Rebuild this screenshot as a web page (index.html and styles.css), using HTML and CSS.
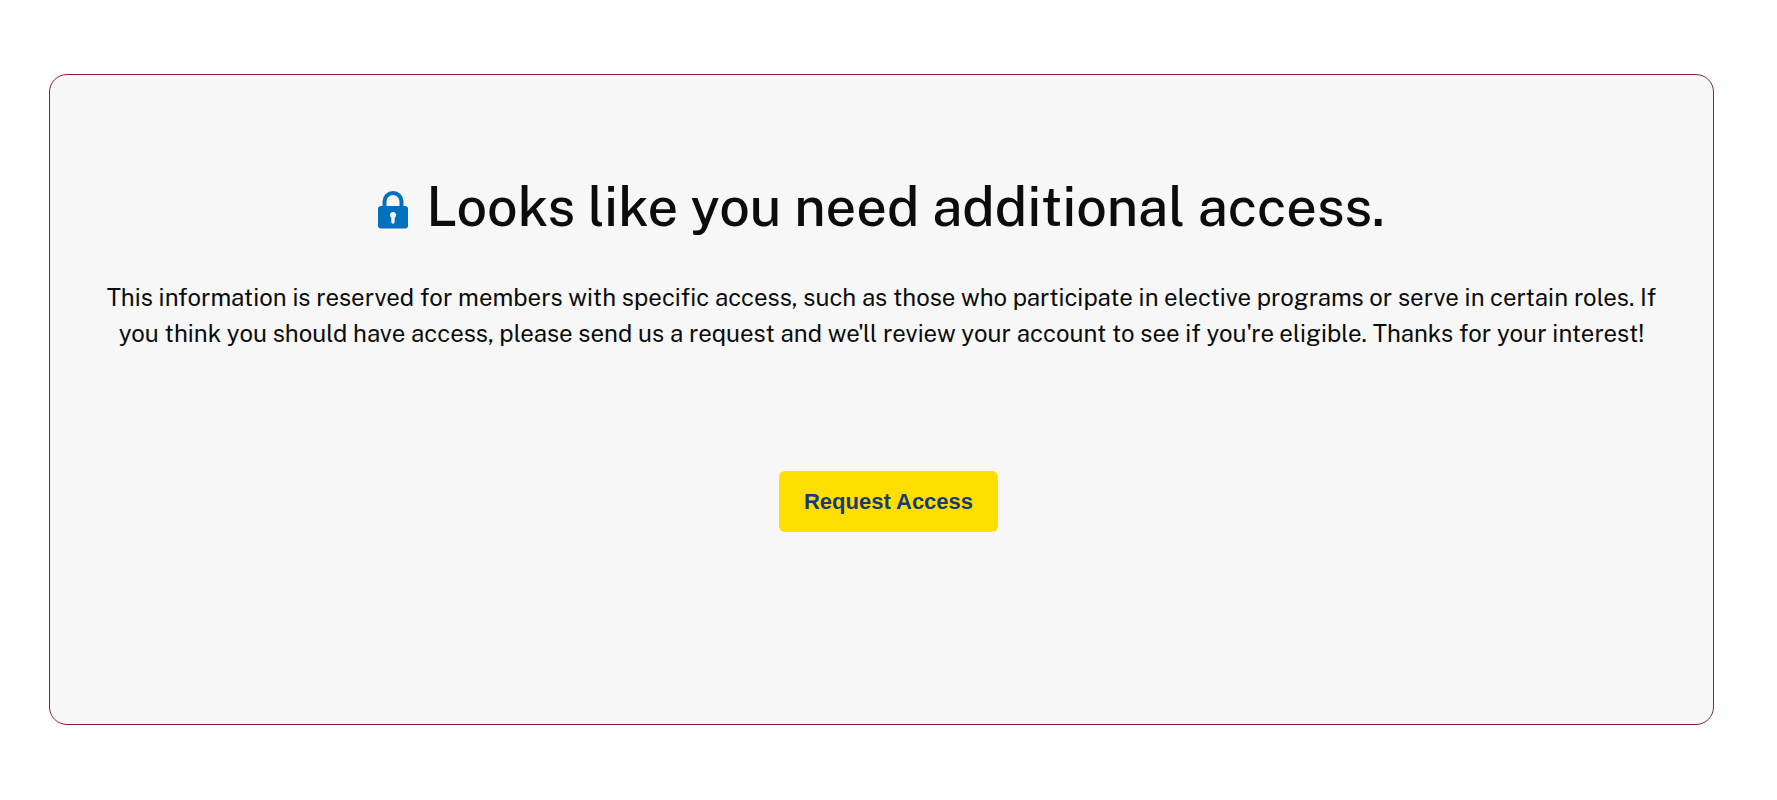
FILE: index.html
```html
<!DOCTYPE html>
<html lang="en">
<head>
  <meta charset="UTF-8" />
  <meta name="viewport" content="width=device-width, initial-scale=1.0" />
  <title>Request Access</title>
  <link rel="stylesheet" href="styles.css">
</head>
<body>
  <main class="access-box">
    <h1 class="access-title">
      <svg class="lock-icon" viewBox="0 0 30 38" aria-hidden="true">
        <path d="M6.5 16V10.5a8.5 8.5 0 0 1 17 0V16" fill="none" stroke="#0070bf" stroke-width="4" />
        <rect x="0" y="15" width="30" height="22.5" rx="3" fill="#0070bf" />
        <path d="M15 21a3.2 3.2 0 0 1 1.7 5.9V31a1.7 1.7 0 0 1-3.4 0v-4.1A3.2 3.2 0 0 1 15 21z" fill="#f7f7f7" />
      </svg>
      <span>Looks like you need additional access.</span>
    </h1>
    <p class="access-text">This information is reserved for members with specific access, such as those who participate in elective programs or serve in certain roles. If you think you should have access, please send us a request and we'll review your account to see if you're eligible. Thanks for your interest!</p>
    <div class="access-actions">
      <button type="button" class="request-button">Request Access</button>
    </div>
  </main>
</body>
</html>
```
FILE: styles.css
```css
body {
  margin: 0;
  padding: 74px 63px 74px 49px;
  background: #ffffff;
  color: #0b0c0c;
  font-family: "Public Sans", Inter, sans-serif;
}
.access-box {
  background-color: #f7f7f7;
  border: 1px solid #8b1f38;
  border-radius: 18px;
  padding: 96px 48px 192px;
  text-align: center;
}
.access-title {
  display: flex;
  justify-content: center;
  align-items: center;
  gap: 18px;
  margin: 0;
  font-size: 54px;
  font-weight: 500;
  line-height: 72px;
}
.lock-icon {
  width: 30px;
  height: 38px;
  margin-top: 6px;
}
.access-text {
  margin: 36px 0 0;
  font-size: 24px;
  font-weight: 400;
  line-height: 36px;
}
.access-actions {
  margin-top: 120px;
  padding-left: 14px;
}
.request-button {
  background-color: #ffde00;
  border: none;
  border-radius: 6px;
  padding: 16px 25px;
  color: #173b75;
  font-family: "Liberation Sans", Arial, sans-serif;
  font-size: 22px;
  font-weight: bold;
  line-height: 29px;
  cursor: pointer;
}
```
